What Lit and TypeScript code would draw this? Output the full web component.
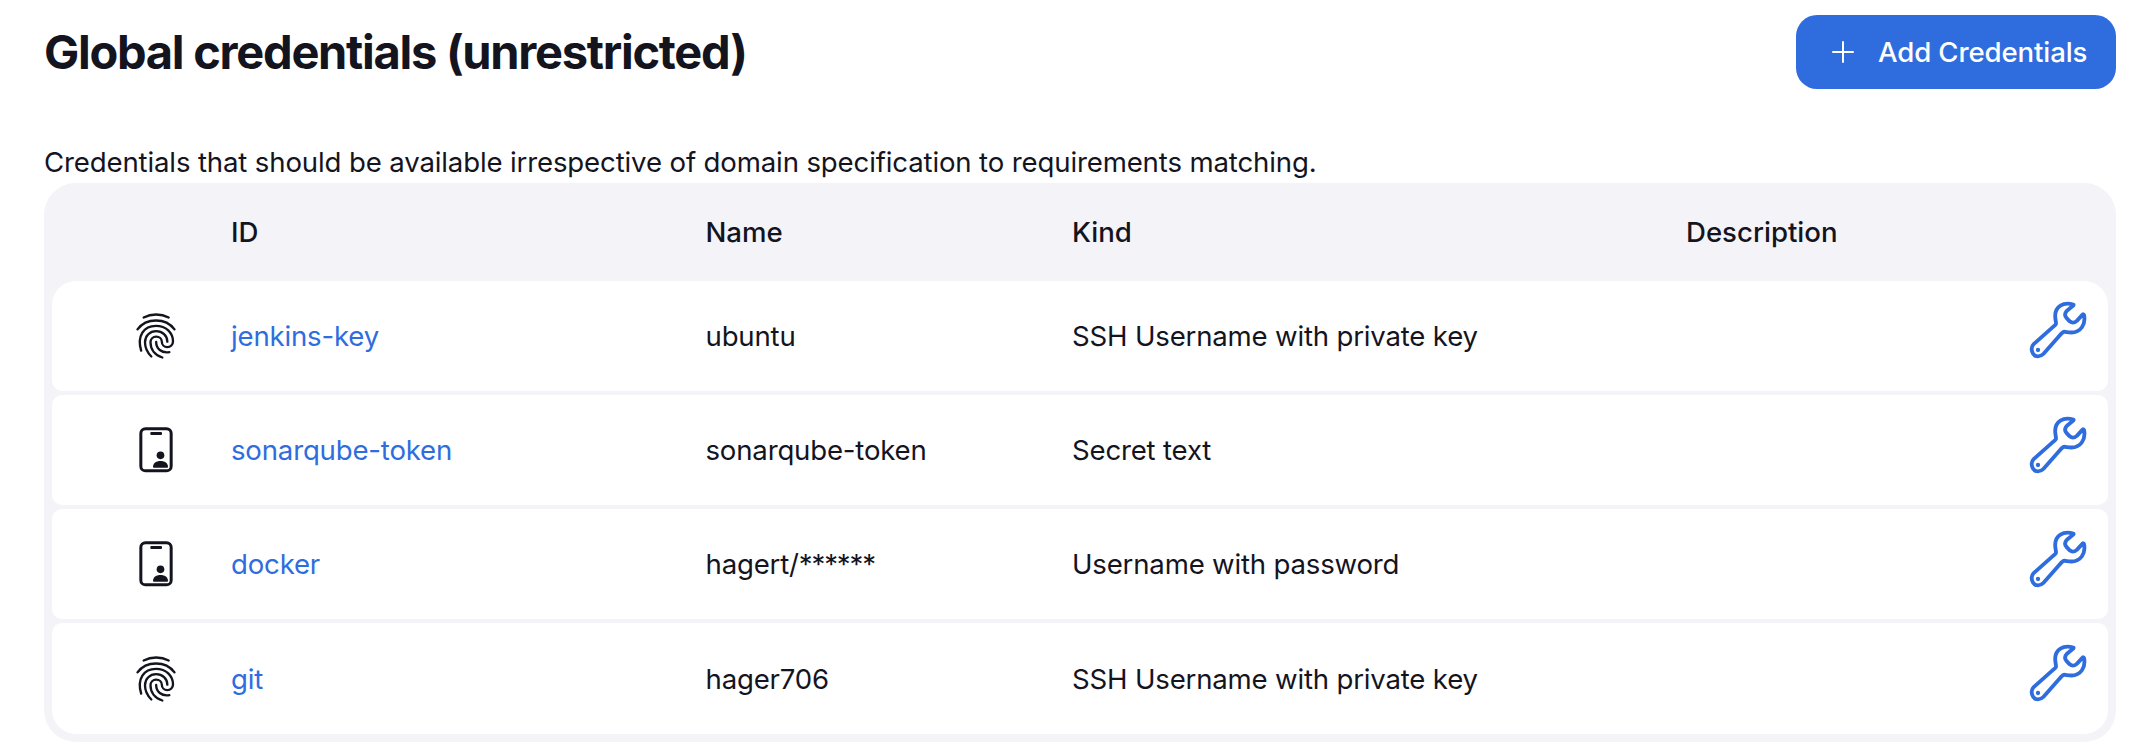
import { LitElement, html, css, svg } from "lit";
import { customElement, state } from "lit/decorators.js";

interface Credential {
  id: string;
  name: string;
  mask?: string;
  kind: string;
  icon: "fingerprint" | "badge";
}

const CREDENTIALS: Credential[] = [
  { id: "jenkins-key", name: "ubuntu", kind: "SSH Username with private key", icon: "fingerprint" },
  { id: "sonarqube-token", name: "sonarqube-token", kind: "Secret text", icon: "badge" },
  { id: "docker", name: "hagert/", mask: "******", kind: "Username with password", icon: "badge" },
  { id: "git", name: "hager706", kind: "SSH Username with private key", icon: "fingerprint" },
];

const fingerprint = html`<svg class="icon" viewBox="36 36 144 144" aria-hidden="true">
  ${svg`<g fill="none" stroke="currentColor" stroke-width="7" stroke-linecap="round" stroke-linejoin="round">
    <path d="M71 52.500C94 40.500 123 40.500 146 52.500"/>
    <path d="M52.500 88C79 52.500 137 52.500 163.500 88"/>
    <path d="M63.500 152C50 107 72 77.500 108 77.500C138 77.500 159 98 159 124.500C159 134 151.500 141.500 142 141.500C132.500 141.500 125.500 134 125.500 125C125.500 116 118 110 108.500 110C99 110 91.500 117 91.500 127C91.500 149 105 166 127 172.500"/>
    <path d="M94 169.500C80 156 75 143 75 127C75 107 90 93.500 108.500 93.500C127 93.500 142 107 142 125"/>
    <path d="M108.500 126C108.500 146 124 160 148 156.500"/>
  </g>`}
</svg>`;

const badge = html`<svg class="icon" viewBox="36 33 144 144" aria-hidden="true">
  ${svg`<rect x="62.500" y="41" width="91" height="126.500" rx="14" fill="none" stroke="currentColor" stroke-width="9"/>
    <rect x="91" y="51" width="35" height="9" rx="3" fill="currentColor"/>
    <circle cx="121.500" cy="121" r="11.500" fill="currentColor"/>
    <path d="M99 156C99 144 109 138 121.500 138S144 144 144 156Q144 158.500 141.500 158.500H101.500Q99 158.500 99 156Z" fill="currentColor"/>`}
</svg>`;

const wrench = html`<svg class="wrench" viewBox="48 24 192 192" aria-hidden="true">
  ${svg`<path fill="none" stroke="currentColor" stroke-width="11.500" stroke-linejoin="round" d="M190 43.500C159 35 136 49 135.500 77C135.400 90 139.500 98 137.500 102.500C136 106 131 109 125 114.500L71 162.500C60 173 65 199 84 199C92 199 96 196 100 192L147 139C151 134 156 127 161 125.500C166 124.500 173 127.500 184 127.500C212 127.500 228 103 222 75Q220.500 71 217 74.500L200.500 92.500C193 99 185 99 179 94L170 84.500C164 78 164 70 170 63L189 47.500Q192 45 190 43.500Z"/>
    <circle cx="84" cy="180" r="6.500" fill="currentColor"/>`}
</svg>`;

@customElement("app-root")
export class AppRoot extends LitElement {
  @state() private credentials = CREDENTIALS;

  static styles = css`
    :host {
      display: block;
      box-sizing: border-box;
      height: 756px;
      padding: 15px 24px 14px 44px;
      background: #fff;
      color: #14141f;
      font: 400 27.6px/36px Inter, "Liberation Sans", sans-serif;
      letter-spacing: -0.19px;
    }
    .bar {
      display: flex;
      justify-content: space-between;
      align-items: center;
      height: 74px;
    }
    h1 {
      margin: 0;
      font-size: 47px;
      font-weight: 700;
      line-height: 60px;
      letter-spacing: -1.27px;
    }
    .add {
      display: flex;
      align-items: center;
      box-sizing: border-box;
      width: 320px;
      height: 74px;
      padding: 0 0 0 36px;
      gap: 24px;
      border: 0;
      border-radius: 21px;
      background: #2f6ddf;
      color: #fff;
      font: inherit;
      font-weight: 500;
      letter-spacing: -0.12px;
      white-space: nowrap;
    }
    .plus {
      width: 22px;
      height: 22px;
      flex: none;
    }
    .intro {
      margin: 55px 0 3px;
      letter-spacing: -0.145px;
    }
    .table {
      box-sizing: border-box;
      height: 559px;
      padding: 0 8px 8px;
      border-radius: 32px;
      background: #f3f3f8;
    }
    .cells {
      display: grid;
      grid-template-columns: 179px 474.500px 366.500px 614px 1fr;
      align-items: center;
    }
    .head {
      height: 98px;
      font-weight: 500;
      letter-spacing: 0;
    }
    .rows {
      display: grid;
      grid-template-rows: repeat(3, 110px) 111px;
      gap: 4px;
    }
    .row {
      border-radius: 10px;
      background: #fff;
    }
    .row:first-child {
      border-top-left-radius: 24px;
      border-top-right-radius: 24px;
    }
    .row:last-child {
      border-bottom-left-radius: 24px;
      border-bottom-right-radius: 24px;
    }
    .icon {
      display: block;
      width: 48px;
      height: 48px;
      margin-left: 80px;
    }
    .link {
      color: #2f6ddf;
      text-decoration: none;
    }
    .mask {
      letter-spacing: -1.15px;
    }
    .wrench {
      display: block;
      width: 64px;
      height: 64px;
    }
    .tool {
      justify-self: end;
      align-self: start;
      padding: 18px 18px 0 0;
      color: #2f6ddf;
    }
    .row:first-child .tool {
      padding-top: 17px;
    }
  `;

  render() {
    return html`
      <div class="bar">
        <h1>Global credentials (unrestricted)</h1>
        <button class="add">
          <svg class="plus" viewBox="0 0 22 22" aria-hidden="true">
            <path d="M11 1V21M1 11H21" fill="none" stroke="currentColor" stroke-width="2" stroke-linecap="round" />
          </svg>
          <span>Add Credentials</span>
        </button>
      </div>
      <p class="intro">Credentials that should be available irrespective of domain specification to requirements matching.</p>
      <div class="table">
        <div class="head cells">
          <span></span><span>ID</span><span>Name</span><span>Kind</span><span>Description</span>
        </div>
        <div class="rows">
          ${this.credentials.map(
            (c) => html`<div class="row cells">
              ${c.icon === "fingerprint" ? fingerprint : badge}
              <a class="link">${c.id}</a>
              <span>${c.name}${c.mask ? html`<span class="mask">${c.mask}</span>` : ""}</span>
              <span>${c.kind}</span>
              <a class="tool">${wrench}</a>
            </div>`
          )}
        </div>
      </div>
    `;
  }
}
